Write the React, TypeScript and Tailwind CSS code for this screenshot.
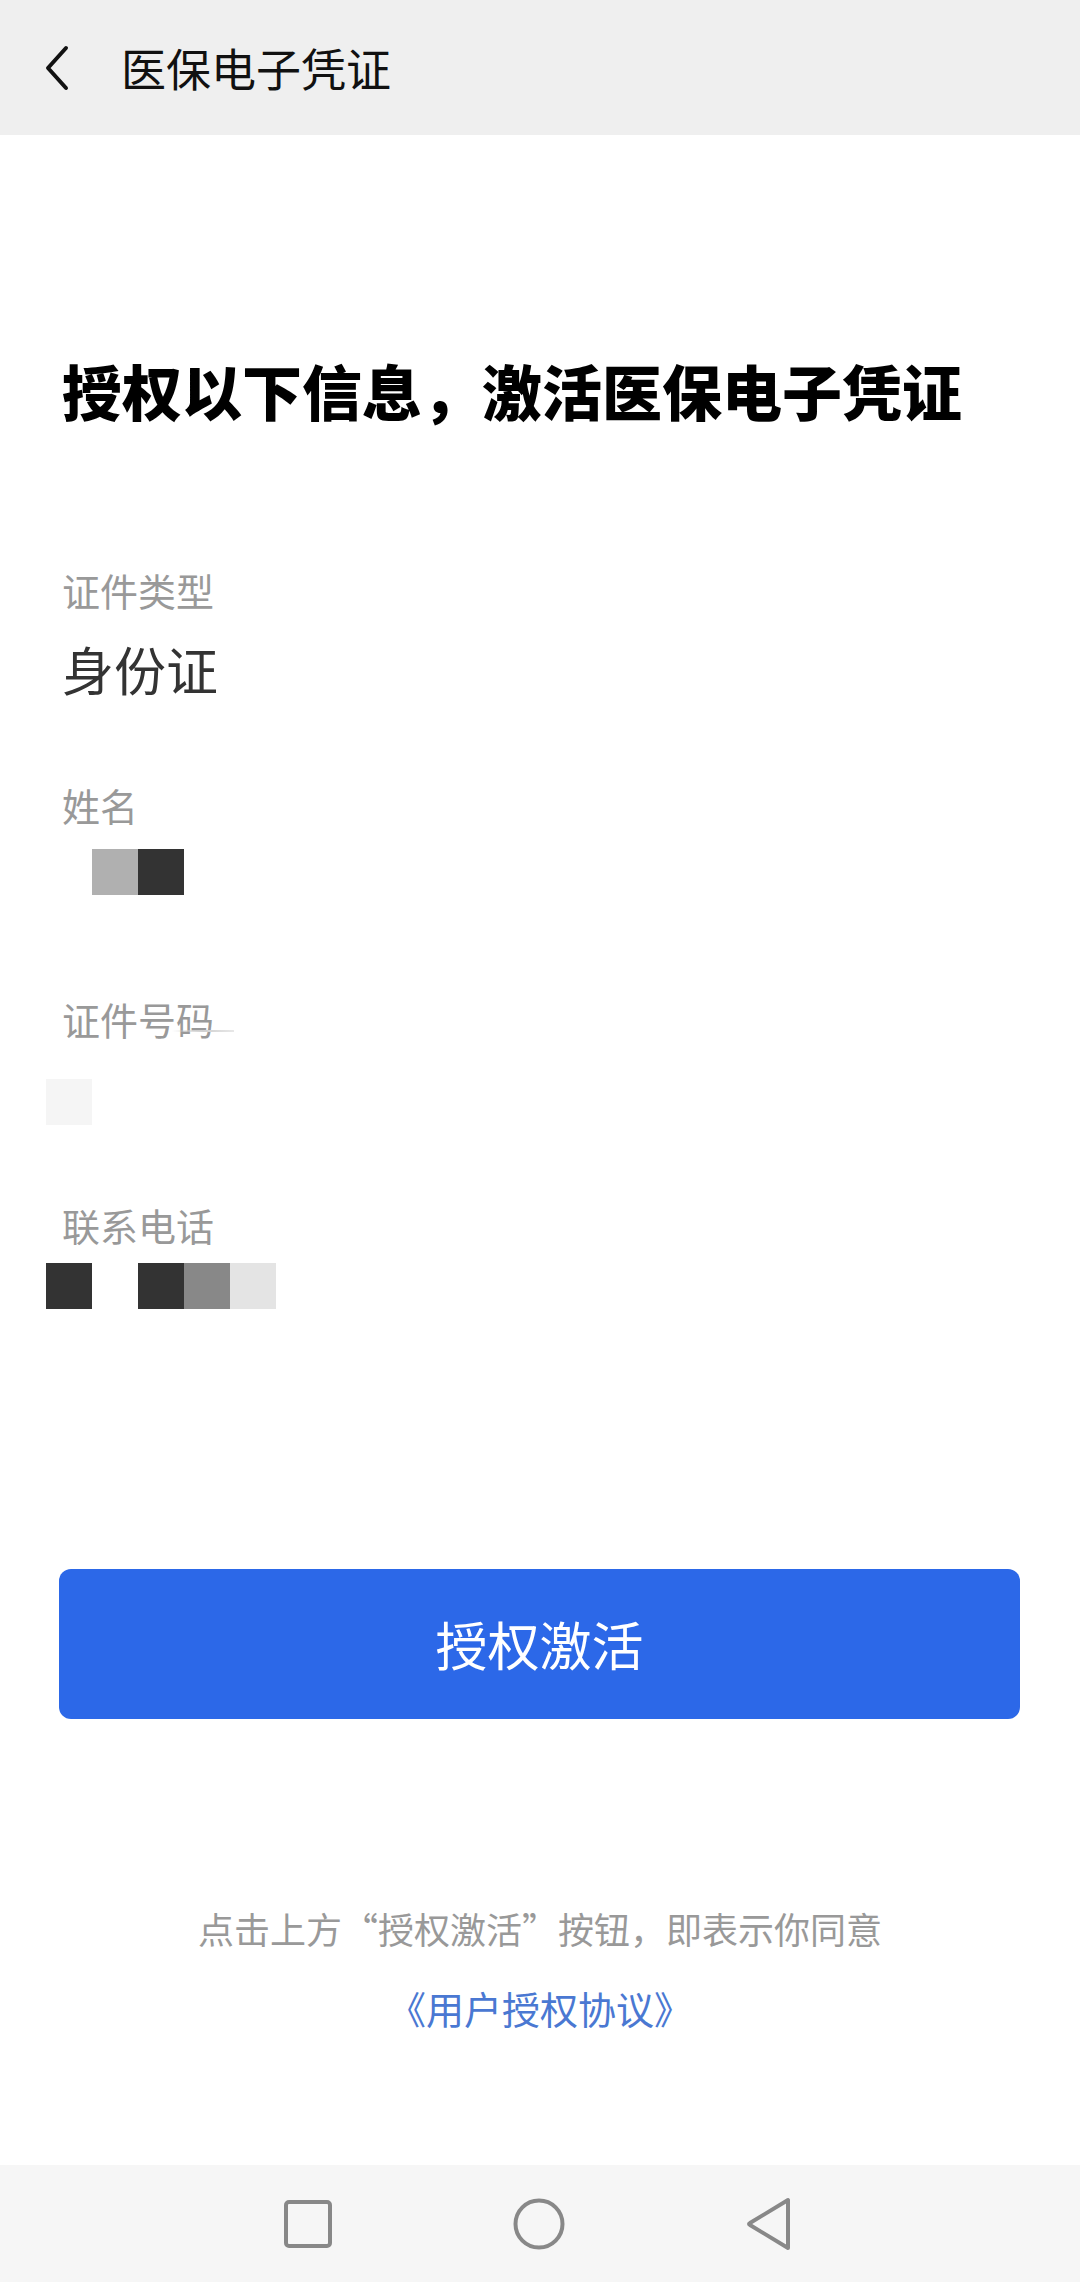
import React from 'react'

const FONT = { fontFamily: '"Noto Sans CJK SC", "Noto Sans", sans-serif' }

function Mosaic({ colors }: { colors: string[] }) {
  return (
    <div className="flex">
      {colors.map((c, i) => (
        <div key={i} className="w-[46px] h-[46px]" style={{ background: c }} />
      ))}
    </div>
  )
}

export default function App() {
  return (
    <div className="w-[1080px] h-[2282px] bg-white flex flex-col" style={FONT}>

      {/* Header */}
      <header className="h-[135px] bg-[#efefef] flex items-center shrink-0">
        <svg width="24" height="46" viewBox="0 0 24 46" className="ml-[45px]">
          <path d="M21 3 L3 23 L21 43" fill="none" stroke="#111" strokeWidth="4" strokeLinecap="round" strokeLinejoin="round" />
        </svg>
        <h1 className="ml-[52px] text-[45px] leading-[45px] text-[#111]">医保电子凭证</h1>
      </header>

      {/* Content */}
      <main className="flex-1 flex flex-col">

        <div className="pl-[62px]">
          <h2 className="mt-[225px] text-[60px] leading-[60px] font-black text-black">
            授权以下信息，激活医保电子凭证
          </h2>

          <p className="mt-[151px] text-[38px] leading-[38px] text-[#999]">证件类型</p>
          <p className="mt-[34px] text-[52px] leading-[52px] text-[#333]">身份证</p>

          <p className="mt-[91px] text-[38px] leading-[38px] text-[#999]">姓名</p>
          <div className="mt-[25px] ml-[30px]">
            <Mosaic colors={['#b0b0b0', '#333333']} />
          </div>

          <div className="relative mt-[105px] w-fit">
            <p className="text-[38px] leading-[38px] text-[#999]">证件号码</p>
            <div className="absolute left-[110px] top-[30px] w-[62px] h-[2px] bg-gradient-to-r from-transparent via-[#d0d0d0] to-[#e8e8e8]" />
          </div>
          <div className="mt-[41px] -ml-[16px]">
            <Mosaic colors={['#f5f5f5']} />
          </div>

          <p className="mt-[81px] text-[38px] leading-[38px] text-[#999]">联系电话</p>
          <div className="mt-[19px] -ml-[16px]">
            <Mosaic colors={['#333333', '#ffffff', '#333333', '#888888', '#e4e4e4']} />
          </div>
        </div>

        {/* Button */}
        <div className="pl-[59px] pr-[60px] mt-[260px]">
          <button className="w-full h-[150px] rounded-[12px] bg-[#2c68e8] text-white text-[52px] leading-[52px]" style={FONT}>
            授权激活
          </button>
        </div>

        {/* Agreement */}
        <div className="mt-[191px] flex flex-col items-center">
          <p className="text-[36px] leading-[36px] text-[#999]">点击上方“授权激活”按钮，即表示你同意</p>
          <p className="mt-[43px] text-[38px] leading-[38px] text-[#4a78d2]">《用户授权协议》</p>
        </div>
      </main>

      {/* System nav bar */}
      <nav className="h-[117px] bg-[#f6f6f6] flex items-center justify-center shrink-0">
        <div className="flex items-center gap-[183px] -ml-[4px]">
          <svg width="48" height="48" viewBox="0 0 48 48">
            <rect x="2" y="2" width="44" height="44" rx="3" fill="none" stroke="#888" strokeWidth="4" />
          </svg>
          <svg width="52" height="52" viewBox="0 0 52 52" className="-ml-[2px]">
            <circle cx="26" cy="26" r="23.5" fill="none" stroke="#888" strokeWidth="4" />
          </svg>
          <svg width="46" height="54" viewBox="0 0 46 54" className="-ml-[2px]">
            <path d="M42 3 L42 51 L4 28 Q2 27 4 26 Z" fill="none" stroke="#888" strokeWidth="4" strokeLinejoin="round" />
          </svg>
        </div>
      </nav>
    </div>
  )
}
